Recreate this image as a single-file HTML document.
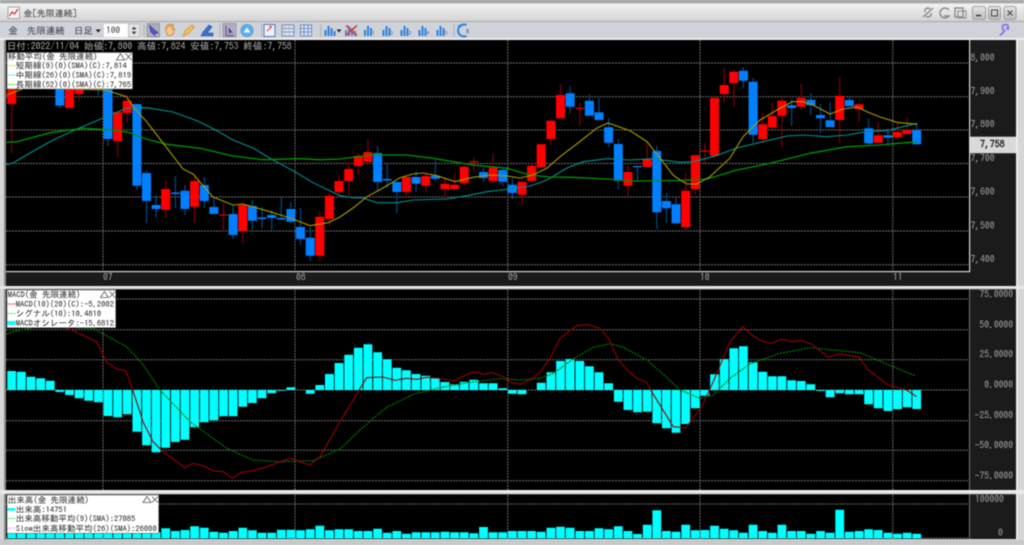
<!DOCTYPE html>
<html><head><meta charset="utf-8"><title>金[先限連続]</title>
<style>
html,body{margin:0;padding:0;width:1024px;height:545px;overflow:hidden;background:#d8d8d8}
svg{display:block;filter:blur(.45px)}
text{font-family:"IPAGothic","Noto Sans CJK JP",monospace;white-space:pre}
.g{stroke:#707070;stroke-width:1;stroke-dasharray:2 1;fill:none}
.a{fill:#a8a8a8;font-size:9.6px}
.l{fill:#222;font-size:8.55px}
.tb{fill:#333843;font-size:9.4px}
</style></head><body>
<svg width="1024" height="545" viewBox="0 0 1024 545" xmlns="http://www.w3.org/2000/svg">
<defs><linearGradient id="tg" x1="0" y1="0" x2="0" y2="1"><stop offset="0" stop-color="#f2f2f2"/><stop offset="1" stop-color="#d4d4d4"/></linearGradient>
<linearGradient id="bg" x1="0" y1="0" x2="0" y2="1"><stop offset="0" stop-color="#e4e4e4"/><stop offset="1" stop-color="#bcbcbc"/></linearGradient></defs>
<!-- chrome -->
<rect width="1024" height="545" fill="#d6d6d6"/>
<rect width="1024" height="3" fill="#a6a6a6"/>
<rect y="4" width="1024" height="17" fill="url(#tg)"/>
<rect y="21" width="1024" height="1" fill="#a8a8a8"/>
<rect y="22" width="1024" height="16" fill="#cfd2d9"/>
<rect y="38" width="1024" height="2" fill="#eeeeee"/>
<rect x="4" y="40" width="2" height="500" fill="#8c8c8c"/>
<!-- panels -->
<rect x="6" y="40" width="963" height="231" fill="#000"/>
<rect x="6" y="272" width="1010" height="14" fill="#1b1b1b"/>
<rect x="970" y="40" width="46" height="232" fill="#1b1b1b"/>
<rect x="969" y="40" width="1.2" height="232" fill="#d8d8d8"/>
<rect x="6" y="271" width="964" height="1.2" fill="#d8d8d8"/>
<rect x="0" y="286" width="1024" height="3" fill="#e8e8e8"/><rect x="6" y="288.5" width="1010" height="1" fill="#999"/>
<rect x="6" y="289.5" width="963" height="200.5" fill="#000"/>
<rect x="970" y="289.5" width="46" height="200.5" fill="#1b1b1b"/>
<rect x="969" y="289.5" width="1" height="200.5" fill="#777"/>
<rect x="0" y="490" width="1024" height="4" fill="#eaeaea"/><rect x="6" y="493.5" width="1010" height="1" fill="#999"/>
<rect x="6" y="494.5" width="963" height="44.5" fill="#000"/>
<rect x="970" y="494.5" width="46" height="44.5" fill="#1b1b1b"/>
<rect x="969" y="494.5" width="1" height="44.5" fill="#777"/>
<rect x="0" y="540" width="1024" height="5" fill="#c8c8c8"/>
<rect x="1016" y="40" width="2" height="500" fill="#ececec"/>
<!-- grids -->
<path class="g" d="M6 63H969M6 96.7H969M6 130H969M6 163.5H969M6 197H969M6 231H969M6 264.7H969M6 299H969M6 329.7H969M6 359.7H969M6 390H969M6 420.7H969M6 450.3H969M6 480.7H969M6 504H969M6 538H969"/>
<path class="g" d="M103 40V271M295 40V271M507.7 40V271M700 40V271M892.8 40V271M103 290V490M295 290V490M507.7 290V490M700 290V490M892.8 290V490M103 495V539M295 495V539M507.7 495V539M700 495V539M892.8 495V539"/>
<!-- wicks -->
<path fill="none" stroke="#8a0000" stroke-width="1.1" d="M11.7 104V153M79.1 94V100M117.6 141V157M127.2 95V123M165.7 180V218M194.6 174V223M223.5 203V232M242.8 203V243M319.8 211V261M329.4 193V226M339 175V197M348.7 162V196M358.3 153V175M367.9 139V162M406.4 177V197M425.7 173V192M445 177V199M454.6 174V189M464.2 165V186M473.8 158V172M493.1 153V183M522 180V205M531.6 163V183M541.2 144V167M550.9 120V145M560.5 84V118M579.8 103V126M627.9 165V197M647.2 143V167M685.7 173V232M695.3 155V195M704.9 143V163M714.5 98V159M724.2 68V102M733.8 70V106M762.7 113V143M772.3 103V128M781.9 98V147M801.2 84V110M839.7 77V143M859 103V122M878.2 122V143M897.5 123V140M907.1 117V134"/>
<path fill="none" stroke="#00508f" stroke-width="1.1" d="M59.8 105V108M98.4 88V95M108 139V146M136.9 185V190M146.5 170V223M156.1 195V217M175.4 176V208M185 185V215M204.3 177V208M213.9 198V214M233.1 205V239M252.4 200V230M262 207V228M271.7 210V230M281.3 197V220M290.9 202V223M300.5 208V245M310.2 227V261M377.6 146V192M387.2 163V188M396.8 182V213M416.1 171V192M435.3 160V181M483.5 168V182M502.7 168V186M512.4 178V199M570.1 86V113M589.4 94V115M599 98V120M608.6 118V147M618.3 139V189M637.5 166V180M656.8 146V229M666.4 193V223M676 197V223M743.4 67V88M753.1 78V143M791.6 99V126M810.8 93V115M820.5 104V133M830.1 102V127M849.3 96V106M868.6 119V145M887.9 128V146M916.7 123V145"/>
<!-- bodies -->
<path fill="none" stroke="#ff0000" stroke-width="9" d="M11.7 86V104M69.500 86V108M79.1 86V94M117.6 112V141M127.2 100.7V113M165.7 189V209.7M194.6 181V206.7M223.5 214.5V215.5M242.8 205V231M319.8 216.7V255.7M329.4 195.7V219M339 181V192M348.7 169V181M358.3 155.7V166M367.9 152V162M406.4 177V192M425.7 176V185.7M445 183.7V189.3M454.6 184.7V189M464.2 166.7V183.3M473.8 161.2V162.2M493.1 167.7V181M522 182V194.7M531.6 165.7V181M541.2 144.3V167.3M550.9 120.7V139M560.5 95V118.3M579.8 107.8V108.8M627.9 172V185.7M647.2 158.7V167M685.7 190.7V227.3M695.3 155.3V189.3M704.9 150.5V151.5M714.5 98V156M724.2 85V94M733.8 71.7V83M762.7 124.3V139.3M772.3 116V127.7M781.9 100.7V115.7M801.2 98V106.7M839.7 95.7V120M859 104.3V109.3M878.2 135.3V142.7M897.5 132V137.3M907.1 130.3V134"/>
<path fill="none" stroke="#0080ff" stroke-width="9" d="M59.8 86V105.7M108 86V139M136.9 104V185.7M146.5 173V201M156.1 205V209M175.4 192.5V194M185 190.7V209M204.3 185V201M213.9 207V214M233.1 214V235M252.4 206V220.7M262 217.5V219M271.7 215V218M281.3 218V219.5M290.9 209V221.7M300.5 227V239M310.2 237.7V255.7M377.6 153V182M387.2 179V180.5M396.8 182V192M416.1 177V183.7M435.3 175.7V178.7M483.5 172V178M502.7 170V181.7M512.4 184.7V193M570.1 93.3V106.7M589.4 100.7V115.7M599 112.3V120M608.6 127.3V142.7M618.3 144V180.7M637.5 166V167.3M656.8 151V212.3M666.4 201V208.3M676 204.3V223.3M743.4 70.7V80.7M753.1 81.7V134.7M791.6 105.3V108M810.8 99.7V105.3M820.5 115V118.3M830.1 120.3V127M849.3 100V106.3M868.6 128.3V143.3M887.9 135.3V137.7M916.7 130.3V144.3"/>
<!-- MAs -->
<g fill="none" stroke-width="1.1">
<polyline stroke="#008f8f" points="6.7,165 13,163 30,153 53,140 77,129 103,118 127,108 147,107.7 173,112 197,120.7 217,130.7 233,140 253,148 273,160 293,170.7 313,182.7 340,195.7 353,197.7 363,198 377,202.7 397,202.7 413,200 447,199 467,195.7 487,191.7 510,189 530,186 547,180 567,168 583,161.7 607,158.7 630,160 653,158.7 680,162.3 693,161.7 713,156.7 737,148 763,141.7 787,136 803,135 827,136.7 847,135 867,131.7 887,130.7 917,123.3"/>
<polyline stroke="#009400" stroke-width="1.3" points="6.7,142.3 17,141.7 50,132.7 83,128.3 113,130 130,132.7 147,139.3 167,144.3 200,148.3 233,156 263,159.7 300,158.7 320,159.7 340,159 370,155 407,155 433,158.3 473,165 507,168.3 530,175 550,177 573,177.3 607,179 633,181 680,180.5 707,179 737,170 767,164 810,153.3 847,146.7 880,145 917,141.7"/>
<polyline stroke="#a89a00" points="6.7,95 25,88 105,90 126.7,96.7 133,106.7 146.7,121.7 163,143 183,169 193,174 213,197 233,205 243,204 270,211.7 290,218 310,225.7 328,222.7 340,217 353,208 367,196.7 383,188 400,177.7 413,174 423,173 437,175.7 455,181.7 473,177.3 490,175 507,176 520,178 533,175 547,168 560,156.7 578,143 597,128 608,123 630,130.7 647,141.7 660,158 673,175 680,180 687,184 697,184 710,176.7 730,158 743,136.7 760,120 777,110 792,101.7 803,101.7 813,105 830,114 843,109 857,107 867,111.7 880,117 897,122.3 917,124.3"/>
</g>
<!-- MACD histogram -->
<path fill="none" stroke="#00ffff" stroke-width="8.8" d="M11.7 371V390M21.3 371.7V390M31 376.7V390M40.6 378.3V390M50.2 380.7V390M59.8 390V392M69.5 390V395M79.1 390V398.3M88.7 390V400.7M98.4 390V402.3M108 390V416M117.6 390V417.3M127.2 390V414.3M136.9 390V431.7M146.5 390V445.3M156.1 390V452.3M165.7 390V447.7M175.4 390V442M185 390V439.7M194.6 390V427.3M204.3 390V422.3M213.9 390V420.3M223.5 390V416.3M233.1 390V416.3M242.8 390V406.7M252.4 390V403M262 390V398.3M271.7 390V393.3M281.3 390V390.7M290.9 387.3V390M310.2 390V393.7M319.8 385V390M329.4 374V390M339 363V390M348.7 354.7V390M358.3 347.7V390M367.9 344.3V390M377.6 352.3V390M387.2 359.3V390M396.8 367.7V390M406.4 370.3V390M416.1 374V390M425.7 375.7V390M435.3 378.3V390M445 382V390M454.6 384.3V390M464.2 381.7V390M473.8 379.7V390M483.5 383.3V390M493.1 383.3V390M502.7 388.3V390M512.4 390V393.7M522 390V394.3M541.2 382.7V390M550.9 372.3V390M560.5 361V390M570.1 359V390M579.8 361V390M589.4 366.3V390M599 372.3V390M608.6 383.3V390M618.3 390V401.7M627.9 390V410M637.5 390V412.3M647.2 390V411.7M656.8 390V423.3M666.4 390V428.3M676 390V432.7M685.7 390V424M695.3 390V408.3M704.9 390V395.7M714.5 374.3V390M724.2 359V390M733.8 348.3V390M743.4 346.3V390M753.1 362.3V390M762.7 371.7V390M772.3 376.3V390M781.9 376.3V390M791.6 380.3V390M801.2 381V390M810.8 384.3V390M820.5 390V391M830.1 390V397.3M839.7 390V393.3M849.3 390V394.3M859 390V394.3M868.6 390V404.3M878.2 390V408.3M887.9 390V411M897.5 390V409.3M907.1 390V407.3M916.7 390V409"/>
<polyline fill="none" stroke="#007c00" stroke-width="1.2" stroke-dasharray="2 1" points="6.7,334 16.7,331 40,326 93,328.3 126.7,346.7 143.3,365 160,390 190,421.7 226.7,448.3 253,460 280,461.7 313,460.7 340,449 360,430 373.3,418.3 386.7,407.3 413.3,394.3 440,387.7 466.7,382.7 500,378.7 520,380 540,378.3 553.3,373.3 573.3,359 593.3,347.3 610,343.7 623.3,347.3 646.7,360 663.3,374.3 680,390 700,398.3 713.3,395 730,378.3 750,364 780,353.3 810,347.7 840,350.7 860,352.7 886.7,364 915,375.7"/>
<polyline fill="none" stroke="#9a0000" stroke-width="1.1" points="50,322 71.7,330 96.7,341.7 106.7,362.3 116.7,369 126,370.7 133.3,391.7 143,421.7 153,441.7 163,451.7 185,467.7 193,463.3 203,465.7 213,470.7 223,471.7 232.3,478.3 241.7,472.3 251.7,471 266.7,466.7 290,458.3 310,465 320,456.7 340,421.7 366.7,377.7 383,377 395,380.3 406.7,378.3 416.7,379.3 426.7,377.3 440,378.3 453.3,381 473.3,371.7 483.3,374.3 491.7,372.7 503.3,376.7 511.7,382.7 520,384 530,380 540,372.3 550,358.3 560,338.3 576.7,325.7 588.3,324.7 600,328.3 608.3,338.3 618.3,360 628.3,371 636.7,378.3 646.7,382.3 651.7,391.7 673.3,426.7 686,427.7 701.7,406.7 713.3,381.7 730,341.7 742.7,326.7 751.7,335 763.3,341.7 771.7,343.3 781.7,339.3 791.7,341.7 801.7,340.7 811.7,344 828.3,357.3 840,353.7 859.3,357.3 868.3,370 888.3,385 906.7,390 916.7,396.7"/>
<!-- volume -->
<path fill="none" stroke="#00ffff" stroke-width="8.8" d="M11.7 530V538.4M21.3 530V538.4M31 530V538.4M40.6 530V538.4M50.2 530V538.4M59.8 530V538.4M69.5 530V538.4M79.1 530V538.4M88.7 530V538.4M98.4 530V538.4M108 530V538.4M117.6 530V538.4M127.2 530V538.4M136.9 530V538.4M146.5 530V538.4M156.1 532V538.4M165.7 528.3V538.4M175.4 531V538.4M185 530V538.4M194.6 526.3V538.4M204.3 527.7V538.4M213.9 531.7V538.4M223.5 532.7V538.4M233.1 531V538.4M242.8 527.7V538.4M252.4 530.3V538.4M262 532.7V538.4M271.7 532.7V538.4M281.3 529.7V538.4M290.9 529.7V538.4M300.5 530.3V538.4M310.2 529.3V538.4M319.8 525.7V538.4M329.4 530.3V538.4M339 529.3V538.4M348.7 529.3V538.4M358.3 531V538.4M367.9 531V538.4M377.6 528.7V538.4M387.2 532.7V538.4M396.8 531V538.4M406.4 533.7V538.4M416.1 532.3V538.4M425.7 532.3V538.4M435.3 532.3V538.4M445 531.7V538.4M454.6 532.3V538.4M464.2 532.3V538.4M473.8 533.3V538.4M483.5 527V538.4M493.1 532.3V538.4M502.7 532.3V538.4M512.4 531V538.4M522 531V538.4M531.6 531V538.4M541.2 531.7V538.4M550.9 527.7V538.4M560.5 526.7V538.4M570.1 527.7V538.4M579.8 531V538.4M589.4 531V538.4M599 528.3V538.4M608.6 529.3V538.4M618.3 526.3V538.4M627.9 531V538.4M637.5 534V538.4M647.2 524.7V538.4M656.8 510.3V538.4M666.4 531V538.4M676 531.7V538.4M685.7 524.7V538.4M695.3 530.3V538.4M704.9 530V538.4M714.5 525.7V538.4M724.2 528.7V538.4M733.8 530.3V538.4M743.4 532.7V538.4M753.1 524.7V538.4M762.7 531V538.4M772.3 532.7V538.4M781.9 524.7V538.4M791.6 531V538.4M801.2 531V538.4M810.8 533.7V538.4M820.5 531V538.4M830.1 532.7V538.4M839.7 509.7V538.4M849.3 531.7V538.4M859 531V538.4M868.6 529.3V538.4M878.2 530V538.4M887.9 532.7V538.4M897.5 533.7V538.4M907.1 532.7V538.4M916.7 533.7V538.4"/>
<!-- legend boxes -->
<rect x="7" y="52.5" width="125.5" height="36.5" fill="#fff" stroke="#666" stroke-width=".6"/>
<rect x="7" y="290" width="108.7" height="37.7" fill="#fff" stroke="#666" stroke-width=".6"/>
<rect x="7" y="495" width="151.7" height="38.3" fill="#fff" stroke="#666" stroke-width=".6"/>
<path stroke="#e6e650" d="M7.5 65.5H15.5" fill="none" stroke-width="1"/>
<path stroke="#80f0ff" d="M7.5 75H15.5" fill="none" stroke-width="1.2"/>
<path stroke="#55f055" d="M7.5 84.5H15.5" fill="none" stroke-width="1"/>
<path stroke="#ff8080" d="M7.5 304H15.5" fill="none" stroke-width="1.2"/>
<path stroke="#50e050" stroke-dasharray="2 1" d="M7.5 313.5H15.5" fill="none"/>
<rect x="7.5" y="321" width="8" height="4" fill="#00ffff"/>
<rect x="7.5" y="508" width="8" height="2.6" fill="#00ffff"/>
<path stroke="#60ff60" d="M7.5 518.5H15.5" fill="none"/>
<path stroke="#ffb0ff" d="M7.5 528H15.5" fill="none"/>
<g fill="none" stroke="#555" stroke-width=".8">
<path d="M116.5 60L120.5 53.5L124.5 60Z M125.5 53.5L131.5 60M131.5 53.5L125.5 60"/>
<path d="M100.5 297.500L104.500 291.500L108.500 297.500Z M109.500 291.500L115 297.500M115 291.500L109.500 297.500"/>
<path d="M143 502.500L147 496.500L151 502.500Z M152 496.500L158 502.500M158 496.500L152 502.500"/>
</g>
<!-- legend text -->
<g class="l">
<text class="l" x="7.700" y="59.500">移動平均(金 先限連続)</text>
<text class="l" x="15.700" y="68.700">短期線(9)(0)(SMA)(C):7,814</text>
<text class="l" x="15.700" y="78">中期線(26)(0)(SMA)(C):7,819</text>
<text class="l" x="15.700" y="87.500">長期線(52)(0)(SMA)(C):7,765</text>
<text class="l" x="7.700" y="297.700">MACD(金 先限連続)</text>
<text class="l" x="15.700" y="307">MACD(10)(20)(C):-5.2002</text>
<text class="l" x="15.700" y="316.300">シグナル(10):10.4810</text>
<text class="l" x="15.700" y="326">MACDオシレータ:-15.6812</text>
<text class="l" x="7.700" y="503">出来高(金 先限連続)</text>
<text class="l" x="15.700" y="512.300">出来高:14751</text>
<text class="l" x="15.700" y="521.300">出来高移動平均(9)(SMA):27085</text>
<text class="l" x="15.700" y="531.300">Slow出来高移動平均(26)(SMA):26000</text>
</g>
<text x="6.700" y="49.500" font-size="9.660" fill="#b0b0b0">日付:2022/11/04 始値:7,800 高値:7,824 安値:7,753 終値:7,758</text>
<!-- axis labels -->
<text class="a" x="970.500" y="61">8,000</text>
<text class="a" x="970.500" y="94.700">7,900</text>
<text class="a" x="970.500" y="127.500">7,800</text>
<text class="a" x="970.500" y="161.500">7,700</text>
<text class="a" x="970.500" y="195">7,600</text>
<text class="a" x="970.500" y="229">7,500</text>
<text class="a" x="970.500" y="262.500">7,400</text>
<rect x="970" y="136.700" width="46" height="16.500" fill="#d9d9d9"/>
<text x="980" y="147.500" font-size="9.800" font-weight="bold" fill="#222">7,758</text>
<text class="a" text-anchor="end" x="1013" y="297.500">75.0000</text>
<text class="a" text-anchor="end" x="1013" y="327.800">50.0000</text>
<text class="a" text-anchor="end" x="1013" y="357.500">25.0000</text>
<text class="a" text-anchor="end" x="1013" y="388.200">0.0000</text>
<text class="a" text-anchor="end" x="1013" y="418.500">-25.0000</text>
<text class="a" text-anchor="end" x="1013" y="448.500">-50.0000</text>
<text class="a" text-anchor="end" x="1013" y="479.200">-75.0000</text>
<text class="a" x="975" y="502.500">100000</text>
<text class="a" x="998" y="536">0</text>
<g class="a"><text class="a" x="103" y="280.500">07</text><text class="a" x="296" y="280.500">08</text><text class="a" x="508" y="280.500">09</text><text class="a" x="700" y="280.500">10</text><text class="a" x="893" y="280.500">11</text></g>
<!-- title bar -->
<rect x="8" y="7" width="11.500" height="11.500" fill="#f4f4f4" stroke="#888" stroke-width=".7"/>
<path d="M9.500 16L12 12L14.500 14L18 9" fill="none" stroke="#d02020" stroke-width="1.100"/>
<text x="23.500" y="16.500" font-size="8.900" fill="#333">金[先限連続]</text>
<!-- title right icons -->
<g fill="none" stroke="#8a8a8a" stroke-width="1.400">
<path d="M923 17L933 8M925 12a3 3 0 0 1 5-3M931 13a3 3 0 0 1 -5 3"/>
<path d="M949 10a5 5 0 1 0 0 6H944"/>
<rect x="955" y="8" width="8" height="9"/><rect x="958" y="11" width="8" height="7" stroke-width="1"/>
</g>
<g stroke="#8e8e8e" stroke-width=".8" fill="url(#bg)">
<rect x="972.500" y="6.500" width="13" height="13" rx="2"/><rect x="988.500" y="6.500" width="12" height="13" rx="2"/><rect x="1004" y="6.500" width="12" height="13" rx="2"/>
</g>
<path d="M976 15.500H981" stroke="#333" stroke-width="1.500"/>
<rect x="991.500" y="10" width="6" height="6" fill="none" stroke="#444" stroke-width="1"/>
<path d="M1007.500 10.500L1012.500 15.500M1012.500 10.500L1007.500 15.500" stroke="#444" stroke-width="1.100"/>
<path d="M1000 35.500L1005 30.500M1005 30.500a3 3 0 1 1 3 -1.500l-2-1" fill="none" stroke="#7a78ee" stroke-width="1.800"/>
<!-- toolbar -->
<text class="tb" x="8.500" y="34">金</text>
<text class="tb" x="27" y="34">先限連続</text>
<text class="tb" x="74" y="34">日足</text>
<path d="M95.500 29.500H101L98.200 32.500Z" fill="#222"/>
<rect x="104" y="24" width="24" height="13" fill="#fff"/>
<text x="106" y="33.500" font-size="9.400" fill="#333">100</text>
<rect x="128.500" y="24" width="11" height="13" fill="#e4e4e4" stroke="#aaa" stroke-width=".6"/>
<path d="M131.500 29.500L134 26.500L136.500 29.500ZM131.500 31.500L134 34.500L136.500 31.500Z" fill="#444"/>
<!-- toolbar icons -->
<path d="M144 24V37M220 24V37M261.500 24V37M321 24V37M454 24V37" stroke="#aeb1b8" stroke-width="1"/>
<rect x="147" y="23.500" width="12.500" height="13.500" fill="#a9adb8" stroke="#8e929c" stroke-width=".8"/>
<path d="M149.500 25.500L158 33L154 33.500L155.500 36L151 32Z" fill="#6050d0" stroke="#3a3090" stroke-width=".6"/>
<path d="M166 31c0-2-1-4 0-4l1 1 0-3 1.500 0 0 2 1-3 1.500 0 0 3 1.500-2.500 1 1-1 4 2-1-1 5-2 2h-4z" fill="#f0c890" stroke="#d08030" stroke-width=".8"/>
<path d="M183 36L185 31L192 25L194.500 27L187.500 34Z" fill="#f4c060" stroke="#d89030" stroke-width=".8"/>
<path d="M201 36L203 32L209 25L212 27L207 33L213 33L213 36L204 36Z" fill="#3a70c8" stroke="#2a50a0" stroke-width=".6"/>
<rect x="223" y="23.500" width="13" height="13.500" fill="#aeb1bb" stroke="#8e929c" stroke-width=".8"/>
<path d="M226 25.500V35.500H234" fill="none" stroke="#7a3a90" stroke-width="1"/><path d="M228.500 27.500L233 33L230 32.500L229 34Z" fill="#3c30b0"/>
<circle cx="247" cy="30.500" r="6" fill="#5cb0ea" stroke="#3e90d4" stroke-width=".8"/><path d="M243.500 32.500L247 27.500L250.500 32.500Z" fill="#e8f4ff"/>
<rect x="264" y="24.500" width="11" height="12" fill="#eef0f6" stroke="#4a7cc0" stroke-width="1"/><path d="M267 31L272 26.500M272 26.500L269 26.500" stroke="#e04040" fill="none"/>
<g fill="#dfe4ee" stroke="#5280c0" stroke-width=".8"><rect x="282" y="25" width="12" height="11"/><rect x="300.500" y="25" width="11" height="11"/></g>
<path d="M282 28.500H294M282 32H294M300.500 28.500H311.500M300.500 32H311.500M304 25V36M308 25V36" stroke="#5280c0" stroke-width=".8" fill="none"/>
<path d="M285 25V36M289 25V36" stroke="#c0a0a0" stroke-width=".6"/>
<g fill="#2f80d8">
<path d="M324.500 30h2v6h-2zM327.500 26h2v10h-2zM330.500 28h2v8h-2zM333.500 31h2v5h-2z"/>
<path d="M364 30h2v6h-2zM367 26h2v10h-2zM370 28h2v8h-2zM382.500 30h2v6h-2zM385.500 26h2v10h-2zM388.500 28h2v8h-2zM400.500 30h2v6h-2zM403.500 26h2v10h-2zM406.500 28h2v8h-2zM418.500 30h2v6h-2zM421.500 26h2v10h-2zM424.500 28h2v8h-2zM436.500 30h2v6h-2zM439.500 26h2v10h-2zM442.500 28h2v8h-2z"/>
</g>
<path d="M336.500 29.500H341.500L339 32.500Z" fill="#222"/>
<path d="M345 30h2v6h-2zM348 26h2v10h-2zM351 28h2v8h-2zM354 31h2v5h-2z" fill="#3f88d8"/>
<path d="M346 25.500L357 35.500M357 25.500L346 35.500" stroke="#e03838" stroke-width="1.600"/>
<g font-size="5.500" fill="#2a60b0"><text x="372" y="35">1</text><text x="390.500" y="35">2</text><text x="408.500" y="35">3</text><text x="426.500" y="35">4</text><text x="444.500" y="35">5</text></g>
<path d="M466.500 25a6 6 0 1 0 0 11" fill="none" stroke="#2a84d8" stroke-width="2"/><path d="M458 24.500L462 26L459 28.500Z" fill="#2a84d8"/>
<text x="466" y="34" font-size="6.500" fill="#3060a8">R</text>
</svg>
</body></html>
